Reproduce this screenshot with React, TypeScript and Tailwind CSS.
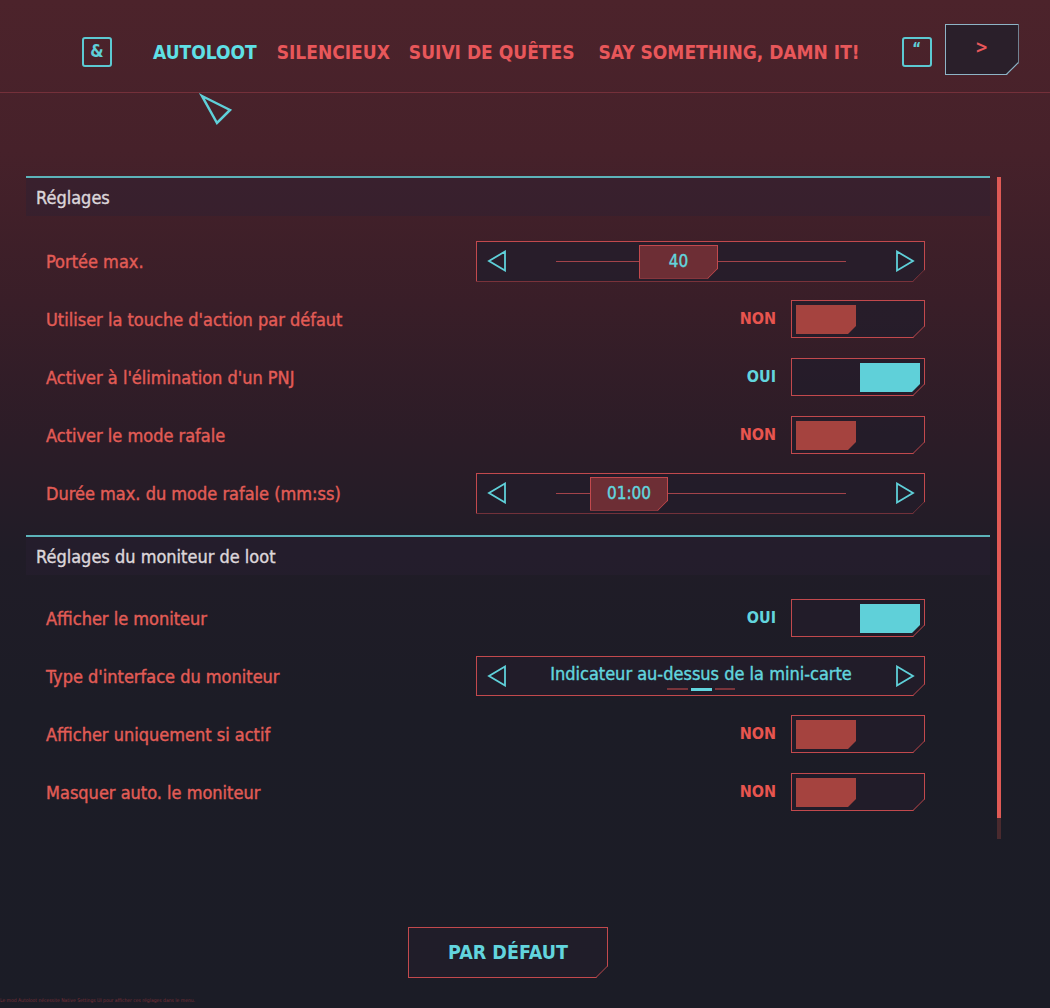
import React from "react";

const FONT = "font-['DejaVu_Sans_Condensed','DejaVu_Sans',sans-serif]";

function Frame({
  className = "",
  line = "bg-[#c2494d]",
  children,
}: {
  className?: string;
  line?: string;
  children?: React.ReactNode;
}) {
  return (
    <div
      className={
        "relative border [clip-path:polygon(0_0,100%_0,100%_calc(100%_-_12px),calc(100%_-_12px)_100%,0_100%)] " +
        className
      }
    >
      {children}
      <span className={"pointer-events-none absolute right-[-3.5px] bottom-[4px] h-[2px] w-[17px] -rotate-45 " + line} />
    </div>
  );
}

function LeftTri() {
  return (
    <svg width="20" height="22" viewBox="0 0 20 22" className="shrink-0">
      <polygon points="18,1.5 2,11 18,20.5" fill="none" stroke="#5fd0d9" strokeWidth="1.8" strokeLinejoin="miter" />
    </svg>
  );
}

function RightTri() {
  return (
    <svg width="20" height="22" viewBox="0 0 20 22" className="shrink-0">
      <polygon points="2,1.5 18,11 2,20.5" fill="none" stroke="#5fd0d9" strokeWidth="1.8" strokeLinejoin="miter" />
    </svg>
  );
}

function Slider({ value, left, width }: { value: string; left: number; width: number }) {
  return (
    <Frame className="h-[41px] w-[449px] border-[#c2494d] bg-[#231d2b]/80">
      <div className="flex h-full items-center pl-[10px] pr-[9px]">
        <LeftTri />
        <div className="mx-[49px] h-px flex-1 bg-[#a3434a]" />
        <RightTri />
      </div>
      <div
        className="absolute top-[3px] flex h-[34px] items-center justify-center border border-[#c2494d] bg-[#6d2e35] text-[17px] text-[#62d5de] [-webkit-text-stroke:0.4px] [clip-path:polygon(0_0,100%_0,100%_calc(100%_-_10px),calc(100%_-_10px)_100%,0_100%)]"
        style={{ left, width }}
      >
        {value}
        <span className="pointer-events-none absolute right-[-3px] bottom-[3px] h-[2px] w-[14px] -rotate-45 bg-[#c2494d]" />
      </div>
    </Frame>
  );
}

function Selector({ value }: { value: string }) {
  return (
    <Frame className="h-[40px] w-[449px] border-[#c2494d] bg-[#231d2b]/80">
      <div className="flex h-full items-center pl-[10px] pr-[9px]">
        <LeftTri />
        <div className="flex flex-1 flex-col items-center pt-[2px]">
          <span className="text-[18px] leading-[20px] whitespace-nowrap text-[#62d5de] [-webkit-text-stroke:0.4px]">{value}</span>
          <div className="mt-[4px] flex items-center gap-[3px]">
            <span className="h-[2px] w-[21px] bg-[#7a343b]" />
            <span className="h-[3px] w-[21px] bg-[#62d5de]" />
            <span className="h-[2px] w-[20px] bg-[#7a343b]" />
          </div>
        </div>
        <RightTri />
      </div>
    </Frame>
  );
}

function Toggle({ on }: { on: boolean }) {
  return (
    <div className="flex items-center">
      <span className={"text-[16px] font-bold " + (on ? "text-[#62d5de]" : "text-[#e8554f]")}>
        {on ? "OUI" : "NON"}
      </span>
      <Frame className="ml-[15px] h-[38px] w-[134px] border-[#c2494d] bg-[#231d2b]/80">
        <div className={"flex h-full px-[4px] pt-[4px] pb-[3px] " + (on ? "justify-end" : "justify-start")}>
          <div
            className={
              "h-full w-[60px] [clip-path:polygon(0_0,100%_0,100%_calc(100%_-_8px),calc(100%_-_8px)_100%,0_100%)] " +
              (on ? "bg-[#5fd0d9]" : "bg-[#a5433f]")
            }
          />
        </div>
      </Frame>
    </div>
  );
}

function Row({ label, children }: { label: string; children: React.ReactNode }) {
  return (
    <div className="flex h-[58px] items-center justify-between pr-[65px] pl-[20px]">
      <span className="text-[18px] whitespace-nowrap text-[#e25c56] [-webkit-text-stroke:0.4px]">{label}</span>
      {children}
    </div>
  );
}

function Section({ title, bodyPad, children }: { title: string; bodyPad: string; children: React.ReactNode }) {
  return (
    <section>
      <div className="flex h-[40px] items-center border-t-2 border-[#5cb3b9] bg-[#2a2035]/40 pl-[10px]">
        <span className="text-[18px] text-[#dcd6da] [-webkit-text-stroke:0.4px]">{title}</span>
      </div>
      <div className={bodyPad}>{children}</div>
    </section>
  );
}

export default function App() {
  return (
    <div
      className={
        "relative min-h-[1008px] w-[1050px] overflow-hidden bg-[linear-gradient(180deg,#4c232b_0%,#46212a_15%,#391e28_30%,#2b1c27_44%,#201c27_55%,#1c1c26_70%,#1b1c26_100%)] " +
        FONT
      }
    >
      {/* top navigation */}
      <header className="relative h-[93px] border-b border-[#74303a] pt-[37px]">
        <div className="flex h-[30px] items-center pl-[82px] whitespace-nowrap">
          <div className="flex h-[30px] w-[30px] items-center justify-center rounded-[3px] border-2 border-[#5cc9d2] text-[17px] font-bold text-[#5fd0d9]">
            &amp;
          </div>
          <span className="ml-[41px] text-[19px] font-bold text-[#5fe0e6]">AUTOLOOT</span>
          <span className="ml-[20px] text-[19px] font-bold text-[#e8575a]">SILENCIEUX</span>
          <span className="ml-[19px] text-[19px] font-bold text-[#e8575a]">SUIVI DE QUÊTES</span>
          <span className="ml-[24px] text-[19px] font-bold text-[#e8575a]">SAY SOMETHING, DAMN IT!</span>
          <div className="ml-[42px] flex h-[30px] w-[30px] shrink-0 items-start justify-center rounded-[3px] border-2 border-[#5cc9d2] pt-[3px] text-[15px] leading-[15px] font-bold text-[#5fd0d9]">
            &ldquo;
          </div>
          <Frame
            className="mb-[5px] ml-[13px] flex h-[51px] w-[74px] shrink-0 items-center justify-center border-[#8eb4c6] bg-[#2a1f2a]"
            line="bg-[#8eb4c6]"
          >
            <span className="-mt-[4px] text-[17px] font-bold text-[#e8575a]">&gt;</span>
          </Frame>
        </div>
        {/* mouse cursor */}
        <svg className="absolute left-[199px] top-[93px]" width="36" height="34" viewBox="0 0 36 34">
          <polygon points="3,3 31,17 18,30" fill="none" stroke="#5fd0d9" strokeWidth="2.5" strokeLinejoin="miter" />
        </svg>
      </header>

      <main className="flex pt-[83px] pl-[26px]">
        <div className="w-[964px]">
          <Section title="Réglages" bodyPad="pt-[16px]">
            <Row label="Portée max.">
              <Slider value="40" left={162} width={79} />
            </Row>
            <Row label="Utiliser la touche d'action par défaut">
              <Toggle on={false} />
            </Row>
            <Row label="Activer à l'élimination d'un PNJ">
              <Toggle on={true} />
            </Row>
            <Row label="Activer le mode rafale">
              <Toggle on={false} />
            </Row>
            <Row label="Durée max. du mode rafale (mm:ss)">
              <Slider value="01:00" left={113} width={78} />
            </Row>
          </Section>
          <div className="h-[13px]" />
          <Section title="Réglages du moniteur de loot" bodyPad="pt-[14px]">
            <Row label="Afficher le moniteur">
              <Toggle on={true} />
            </Row>
            <Row label="Type d'interface du moniteur">
              <Selector value="Indicateur au-dessus de la mini-carte" />
            </Row>
            <Row label="Afficher uniquement si actif">
              <Toggle on={false} />
            </Row>
            <Row label="Masquer auto. le moniteur">
              <Toggle on={false} />
            </Row>
          </Section>
          <div className="mt-[106px] flex justify-center">
            <Frame className="flex h-[51px] w-[200px] items-center justify-center border-[#c2494d] bg-[#221e2b]/80">
              <span className="text-[19.5px] font-bold text-[#62d5de]">PAR DÉFAUT</span>
            </Frame>
          </div>
          <div className="mt-[19px] -ml-[26px] text-[5px] leading-[6px] text-[#7a3038]">
            Le mod Autoloot nécessite Native Settings UI pour afficher ces réglages dans le menu.
          </div>
        </div>
        <div className="mt-px ml-[7px] flex h-[662px] w-[4px] flex-col">
          <div className="flex-1 bg-[#e05a55]" />
          <div className="h-[21px] bg-[#4a2a2e]" />
        </div>
      </main>
    </div>
  );
}
